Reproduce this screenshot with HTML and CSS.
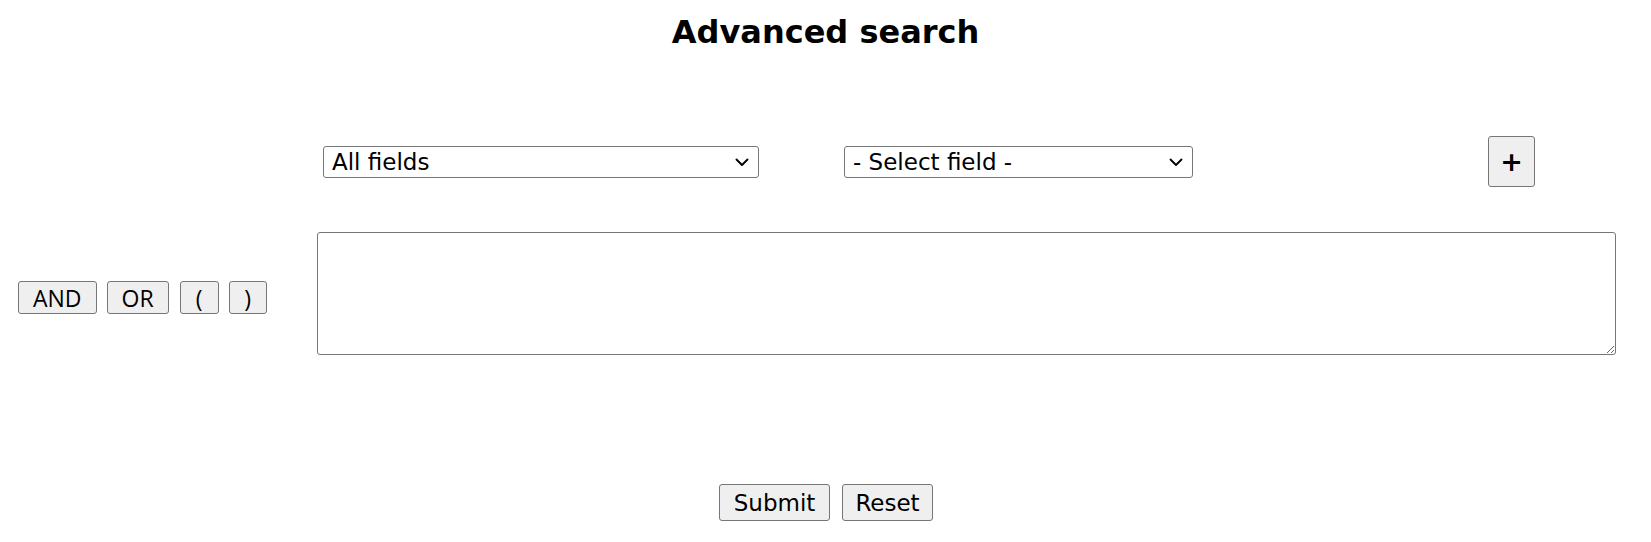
FILE: index.html
```html
<!DOCTYPE html>
<html lang="en">
<head>
<meta charset="utf-8">
<title>Advanced search</title>
<link rel="stylesheet" href="styles.css">
</head>
<body>
<h1 class="title">Advanced search</h1>
<form class="search-form">
  <div class="row-fields">
    <span class="select-wrap select-wrap-main">
      <select class="field-select">
        <option>All fields</option>
      </select>
      <svg class="chevron" width="14" height="9" viewBox="0 0 14 9" aria-hidden="true"><path d="M1.5 1.5 L7 7 L12.5 1.5" fill="none" stroke="#000" stroke-width="1.9" stroke-linecap="round" stroke-linejoin="round"/></svg>
    </span>
    <span class="select-wrap select-wrap-sub">
      <select class="field-select">
        <option>- Select field -</option>
      </select>
      <svg class="chevron" width="14" height="9" viewBox="0 0 14 9" aria-hidden="true"><path d="M1.5 1.5 L7 7 L12.5 1.5" fill="none" stroke="#000" stroke-width="1.9" stroke-linecap="round" stroke-linejoin="round"/></svg>
    </span>
    <button type="button" class="btn btn-add">+</button>
  </div>
  <div class="row-query">
    <div class="ops">
      <button type="button" class="btn btn-op btn-and">AND</button>
      <button type="button" class="btn btn-op btn-or">OR</button>
      <button type="button" class="btn btn-op btn-paren">(</button>
      <button type="button" class="btn btn-op btn-paren btn-paren-close">)</button>
    </div>
    <textarea class="query"></textarea>
  </div>
  <div class="row-actions">
    <button type="submit" class="btn btn-action btn-submit">Submit</button>
    <button type="reset" class="btn btn-action btn-reset">Reset</button>
  </div>
</form>
</body>
</html>
```

FILE: styles.css
```css
html, body {
  margin: 0;
  padding: 0;
  background: #ffffff;
  color: #000000;
}

body {
  font-family: "DejaVu Sans", Verdana, sans-serif;
  width: 1651px;
}

.title {
  margin: 14px 0 0;
  text-align: center;
  font-family: "DejaVu Sans", Verdana, sans-serif;
  font-weight: 700;
  font-size: 32px;
  line-height: 37px;
}

.search-form {
  margin: 0;
}

.row-fields {
  display: flex;
  align-items: center;
  margin-top: 85px;
  padding-left: 323px;
  height: 51px;
}

.select-wrap {
  position: relative;
  display: block;
  height: 32px;
}

.select-wrap-main {
  width: 436px;
}

.select-wrap-sub {
  width: 349px;
  margin-left: 85px;
}

.field-select {
  -webkit-appearance: none;
  appearance: none;
  box-sizing: border-box;
  display: block;
  width: 100%;
  height: 32px;
  font-family: "DejaVu Sans", Verdana, sans-serif;
  font-size: 23px;
  color: #000;
  background-color: #fff;
  border: 1px solid #767676;
  border-radius: 3px;
  padding: 0 30px 0 8px;
  margin: 0;
}

.chevron {
  position: absolute;
  right: 10px;
  top: 12px;
  pointer-events: none;
}

.btn {
  box-sizing: border-box;
  margin: 0;
  background-color: #efefef;
  border: 1px solid #767676;
  border-radius: 3px;
  color: #000;
  padding: 0;
  cursor: default;
}

.btn-add {
  margin-left: 295px;
  width: 47px;
  height: 51px;
  font-family: "DejaVu Sans", Verdana, sans-serif;
  font-weight: 700;
  font-size: 27px;
  line-height: 1;
}

.row-query {
  display: flex;
  align-items: center;
  margin-top: 45px;
}

.ops {
  box-sizing: border-box;
  width: 317px;
  padding-left: 18px;
  margin-top: 8px;
  display: flex;
  gap: 10px;
}

.btn-op {
  height: 33px;
  font-family: "Open Sans", "Noto Sans", sans-serif;
  font-size: 23px;
  line-height: 1;
  padding: 2px 14px 0;
}

.btn-paren {
  width: 39px;
  padding: 2px 0 0;
  margin-left: 1px;
}

.btn-paren-close {
  width: 38px;
  margin-left: 0;
}

.query {
  box-sizing: border-box;
  width: 1299px;
  height: 123px;
  margin: 0;
  border: 1px solid #767676;
  border-radius: 3px;
  background: #fff;
  font-family: "DejaVu Sans", Verdana, sans-serif;
  font-size: 23px;
}

.row-actions {
  display: flex;
  justify-content: center;
  gap: 12px;
  margin-top: 129px;
  padding-left: 1px;
}

.btn-action {
  height: 37px;
  font-family: "DejaVu Sans", Verdana, sans-serif;
  font-size: 23px;
  line-height: 1;
  padding-top: 2px;
}

.btn-submit {
  width: 111px;
}

.btn-reset {
  width: 91px;
}
```
